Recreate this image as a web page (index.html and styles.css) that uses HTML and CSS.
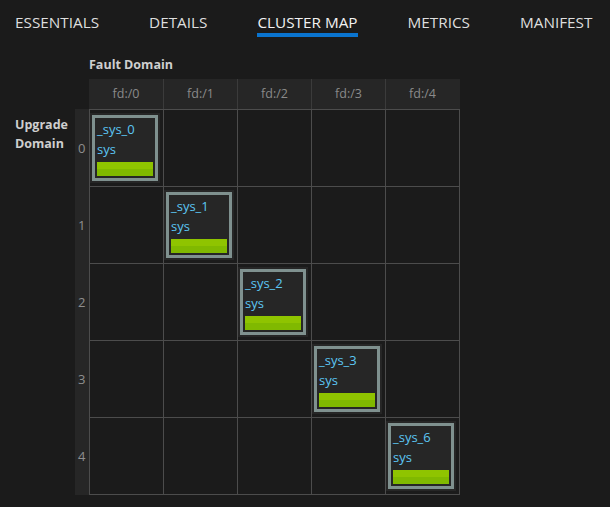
FILE: index.html
```html
<!DOCTYPE html>
<html>
<head>
<meta charset="utf-8">
<link rel="stylesheet" href="styles.css">
</head>
<body>
<nav class="tabs">
  <div class="tab">ESSENTIALS</div>
  <div class="tab">DETAILS</div>
  <div class="tab active">CLUSTER MAP</div>
  <div class="tab">METRICS</div>
  <div class="tab">MANIFEST</div>
</nav>
<section class="map">
  <div class="fd-title">Fault Domain</div>
  <div class="fd-header">
    <div class="fd">fd:/0</div>
    <div class="fd">fd:/1</div>
    <div class="fd">fd:/2</div>
    <div class="fd">fd:/3</div>
    <div class="fd last">fd:/4</div>
  </div>
  <div class="ud-title">Upgrade<br>Domain</div>
  <div class="ud-nums">
    <div class="ud">0</div>
    <div class="ud">1</div>
    <div class="ud">2</div>
    <div class="ud">3</div>
    <div class="ud">4</div>
  </div>
  <div class="cells">
    <div class="cell"><div class="node"><div class="name">_sys_0</div><div class="type">sys</div><div class="bar"></div></div></div>
    <div class="cell"></div><div class="cell"></div><div class="cell"></div><div class="cell"></div>
    <div class="cell"></div>
    <div class="cell"><div class="node"><div class="name">_sys_1</div><div class="type">sys</div><div class="bar"></div></div></div>
    <div class="cell"></div><div class="cell"></div><div class="cell"></div>
    <div class="cell"></div><div class="cell"></div>
    <div class="cell"><div class="node"><div class="name">_sys_2</div><div class="type">sys</div><div class="bar"></div></div></div>
    <div class="cell"></div><div class="cell"></div>
    <div class="cell"></div><div class="cell"></div><div class="cell"></div>
    <div class="cell"><div class="node"><div class="name">_sys_3</div><div class="type">sys</div><div class="bar"></div></div></div>
    <div class="cell"></div>
    <div class="cell"></div><div class="cell"></div><div class="cell"></div><div class="cell"></div>
    <div class="cell"><div class="node"><div class="name">_sys_6</div><div class="type">sys</div><div class="bar"></div></div></div>
  </div>
</section>
</body>
</html>
```
FILE: styles.css
```css
html, body {
  margin: 0;
  padding: 0;
  background: #1b1b1b;
  font-family: "Open Sans", "Noto Sans", sans-serif;
}

.tabs {
  display: flex;
  gap: 50px;
  padding-left: 15px;
  height: 50px;
}

.tab {
  font-size: 15.3px;
  line-height: 20px;
  color: #dedede;
  padding-top: 12px;
  padding-bottom: 1px;
  height: 20px;
  border-bottom: 4px solid transparent;
}

.tab.active {
  color: #f2f2f2;
  border-bottom-color: #0a74cf;
}

.map {
  display: grid;
  grid-template-columns: 60px 14px 371px;
  grid-template-rows: 29px 30px 386px;
  margin-left: 15px;
}

.fd-title {
  grid-column: 3;
  grid-row: 1;
  align-self: end;
  font-size: 12.5px;
  font-weight: 700;
  line-height: 18px;
  color: #cfcfcf;
  padding-bottom: 5px;
}

.fd-header {
  grid-column: 3;
  grid-row: 2;
  display: flex;
  background: #262626;
}

.fd {
  box-sizing: border-box;
  width: 74px;
  border-right: 1px solid #3b3b3b;
  text-align: center;
  font-size: 12.5px;
  line-height: 30px;
  color: #8a8a8a;
}

.fd:first-child {
  width: 75px;
}

.fd.last {
  width: 73px;
  border-right: none;
}

.ud-title {
  grid-column: 1;
  grid-row: 3;
  padding-top: 6px;
  font-size: 12.5px;
  font-weight: 700;
  line-height: 19px;
  color: #cfcfcf;
}

.ud-nums {
  grid-column: 2;
  grid-row: 3;
  display: grid;
  grid-template-rows: repeat(5, 77px);
  background: #262626;
}

.ud {
  display: flex;
  align-items: center;
  padding-left: 3px;
  font-size: 13px;
  color: #8e8e8e;
}

.cells {
  grid-column: 3;
  grid-row: 3;
  display: grid;
  grid-template-columns: repeat(5, 74px);
  grid-template-rows: repeat(5, 77px);
  border-left: 1px solid #4c4c4c;
  border-top: 1px solid #4c4c4c;
}

.cell {
  box-sizing: border-box;
  border-right: 1px solid #4c4c4c;
  border-bottom: 1px solid #4c4c4c;
}

.node {
  box-sizing: border-box;
  width: 66px;
  height: 66px;
  margin: 5px 0 0 2px;
  border: 3px solid #7f918f;
  box-shadow: 0 0 0 2px #262626;
  background: #262626;
  padding: 0 2px 2px 2px;
  display: flex;
  flex-direction: column;
}

.name, .type {
  font-size: 13px;
  line-height: 20px;
  color: #5cc6f4;
}

.name {
  margin-top: 1px;
}

.bar {
  margin-top: auto;
  height: 14px;
  background: linear-gradient(#8fc400 0, #8fc400 50%, #80b900 50%, #80b900 100%);
}
```
